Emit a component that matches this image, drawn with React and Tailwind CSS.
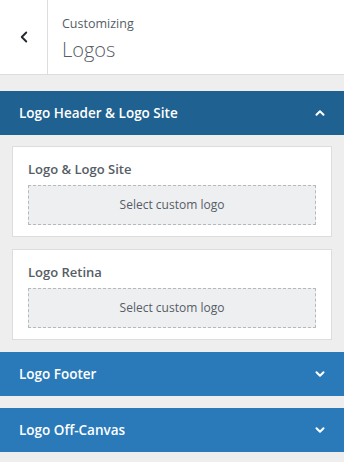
import { ChevronLeft, ChevronUp, ChevronDown } from 'lucide-react';

export default function App() {
  return (
    <div className="w-[344px] h-[462px] bg-[#eeeeee] overflow-hidden font-['Open_Sans',_'Noto_Sans',_sans-serif]">
      <div className="flex h-[75px] bg-white border-b border-[#dddddd]">
        <button className="w-[48px] flex items-center justify-center border-r border-[#dddddd] text-[#23282d]">
          <ChevronLeft size={18} strokeWidth={2.5} />
        </button>
        <div className="pl-[14px] pt-[15px]">
          <div className="text-[12.5px] leading-[18px] text-[#555d66]">Customizing</div>
          <div className="text-[20px] leading-[28px] font-light text-[#555d66] mt-[3px]">Logos</div>
        </div>
      </div>

      <div className="pt-[16px]">
        <Section title="Logo Header & Logo Site" open dark />
        <div className="px-[12px] pt-[11px] pb-[12px] flex flex-col gap-[12px]">
          <LogoCard label="Logo & Logo Site" />
          <LogoCard label="Logo Retina" />
        </div>
        <Section title="Logo Footer" />
        <div className="h-[12px]" />
        <Section title="Logo Off-Canvas" />
      </div>
    </div>
  );
}

function Section({ title, open, dark }) {
  return (
    <div
      className={`h-[44px] flex items-center justify-between pl-[19px] pr-[17px] text-white ${dark ? 'bg-[#1f6190]' : 'bg-[#2a7aba]'}`}
    >
      <span className="text-[13.5px] font-semibold">{title}</span>
      {open ? <ChevronUp size={14} strokeWidth={3.5} /> : <ChevronDown size={14} strokeWidth={3.5} />}
    </div>
  );
}

function LogoCard({ label }) {
  return (
    <div className="bg-white border border-[#dddddd] px-[15px] pt-[13px] pb-[11px]">
      <div className="text-[13px] font-semibold text-[#555d66] leading-[18px]">{label}</div>
      <button className="mt-[7px] w-full h-[40px] bg-[#eeeff1] border border-dashed border-[#b4b9be] text-[12px] text-[#555d66]">
        Select custom logo
      </button>
    </div>
  );
}
